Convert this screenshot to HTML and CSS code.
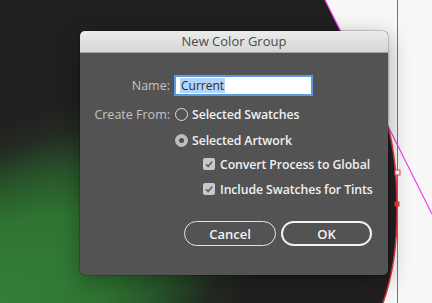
FILE: index.html
```
<!DOCTYPE html>
<html>
<head>
<meta charset="utf-8">
<link rel="stylesheet" href="styles.css">
</head>
<body>
<div class="desk">
  <svg class="canvas" width="432" height="303" viewBox="0 0 432 303">
    <defs>
      <radialGradient id="green" gradientUnits="userSpaceOnUse" cx="0" cy="0" r="340" gradientTransform="translate(-20 315) rotate(-30) scale(1 0.48)">
        <stop offset="0" stop-color="#33803a"/>
        <stop offset="0.45" stop-color="#2f7430"/>
        <stop offset="0.65" stop-color="#29562b"/>
        <stop offset="0.85" stop-color="#232c22"/>
        <stop offset="1" stop-color="#221f20"/>
      </radialGradient>
    </defs>
    <rect width="432" height="303" fill="#f7f7f7"/>
    <path d="M0 0 H325 L388 126 C398 165 404 245 383 303 H0 Z" fill="url(#green)"/>
    <path d="M388 126 C398 165 404 245 383 303" fill="none" stroke="#e8343a" stroke-width="1.5"/>
    <line x1="325" y1="0" x2="432" y2="214" stroke="#ee3df0" stroke-width="1.2"/>
    <line x1="397.5" y1="0" x2="397.5" y2="303" stroke="#e0474b" stroke-width="1"/>
    <rect x="395" y="170" width="5" height="5" fill="#ffffff" stroke="#e0474b" stroke-width="1"/>
    <rect x="394.5" y="201.5" width="5" height="5" fill="#e0393d"/>
  </svg>

  <div class="dialog">
    <div class="titlebar">New Color Group</div>
    <div class="body">
      <div class="row row-name">
        <span class="label">Name:</span>
        <div class="field"><span class="sel">Current</span></div>
      </div>
      <div class="row row-create">
        <span class="label">Create From:</span>
        <span class="radio"></span>
        <span class="opt">Selected Swatches</span>
      </div>
      <div class="row row-art">
        <span class="label"></span>
        <span class="radio on"></span>
        <span class="opt">Selected Artwork</span>
      </div>
      <div class="row row-c1">
        <span class="label"></span>
        <span class="check"><svg width="12" height="12" viewBox="0 0 12 12"><path d="M3 6.3 L5.1 8.5 L9.2 3.6" fill="none" stroke="#5c5c5c" stroke-width="1.6"/></svg></span>
        <span class="opt">Convert Process to Global</span>
      </div>
      <div class="row row-c2">
        <span class="label"></span>
        <span class="check"><svg width="12" height="12" viewBox="0 0 12 12"><path d="M3 6.3 L5.1 8.5 L9.2 3.6" fill="none" stroke="#5c5c5c" stroke-width="1.6"/></svg></span>
        <span class="opt">Include Swatches for Tints</span>
      </div>
      <div class="buttons">
        <button class="btn cancel">Cancel</button>
        <button class="btn ok">OK</button>
      </div>
    </div>
  </div>
</div>
</body>
</html>
```
FILE: styles.css
```
html, body {
  margin: 0;
  padding: 0;
}
body {
  width: 432px;
  height: 303px;
  overflow: hidden;
  font-family: "Open Sans", "Noto Sans", sans-serif;
}
.desk {
  position: relative;
  width: 432px;
  height: 303px;
  padding: 31px 0 0 80px;
  box-sizing: border-box;
}
.canvas {
  position: absolute;
  left: 0;
  top: 0;
  display: block;
}
.dialog {
  position: relative;
  width: 308px;
  height: 244px;
  border-radius: 5px;
  overflow: hidden;
  background: #535353;
  box-shadow: 0 0 0 0.5px rgba(0,0,0,0.35), 0 6px 22px rgba(0,0,0,0.35);
}
.titlebar {
  height: 21px;
  line-height: 21px;
  text-align: center;
  font-size: 13px;
  color: #4a4a4a;
  background: linear-gradient(#ececec, #d6d6d6);
  border-bottom: 1px solid #a3a3a3;
}
.body {
  padding: 22px 0 0 0;
  display: flex;
  flex-direction: column;
}
.row {
  display: flex;
  align-items: center;
  height: 18px;
}
.label {
  width: 90px;
  margin-right: 4px;
  text-align: right;
  font-size: 12.5px;
  font-weight: 500;
  color: #c4c4c4;
  flex: none;
}
.row-name {
  height: 21px;
}
.row-create { margin-top: 9px; }
.row-art { margin-top: 8px; }
.row-c1 { margin-top: 6px; }
.row-c2 { margin-top: 7px; }
.field {
  width: 139px;
  height: 21px;
  box-sizing: border-box;
  border: 2px solid #5a9be4;
  background: #ffffff;
  display: flex;
  align-items: center;
  padding-left: 4px;
}
.sel {
  background: #b4d5fa;
  color: #2a2a2a;
  font-size: 12px;
  font-weight: 500;
  line-height: 15px;
  padding: 0 1px;
}
.radio {
  width: 13px;
  height: 13px;
  box-sizing: border-box;
  border: 1px solid #dcdcdc;
  border-radius: 50%;
  margin-left: 1px;
  margin-right: 4px;
  flex: none;
  display: flex;
  align-items: center;
  justify-content: center;
}
.radio.on {
  background: #bdbdbd;
  border-color: #bdbdbd;
}
.radio.on::after {
  content: "";
  width: 5px;
  height: 5px;
  border-radius: 50%;
  background: #505050;
}
.opt {
  font-size: 12.3px;
  font-weight: 600;
  letter-spacing: -0.1px;
  color: #f0f0f0;
  white-space: nowrap;
}
.check {
  width: 12px;
  height: 12px;
  border-radius: 2px;
  background: #c8c8c8;
  margin-left: 29px;
  margin-right: 5px;
  flex: none;
  display: flex;
}
.buttons {
  display: flex;
  justify-content: flex-end;
  gap: 5px;
  padding-right: 16px;
  margin-top: 23px;
}
.btn {
  height: 25px;
  border-radius: 13px;
  background: transparent;
  color: #f4f4f4;
  font-family: "Open Sans", "Noto Sans", sans-serif;
  font-size: 13px;
  font-weight: 600;
  padding: 0;
  box-sizing: border-box;
}
.cancel {
  width: 92px;
  border: 1px solid #e4e4e4;
}
.ok {
  width: 91px;
  border: 2px solid #f2f2f2;
}
```
